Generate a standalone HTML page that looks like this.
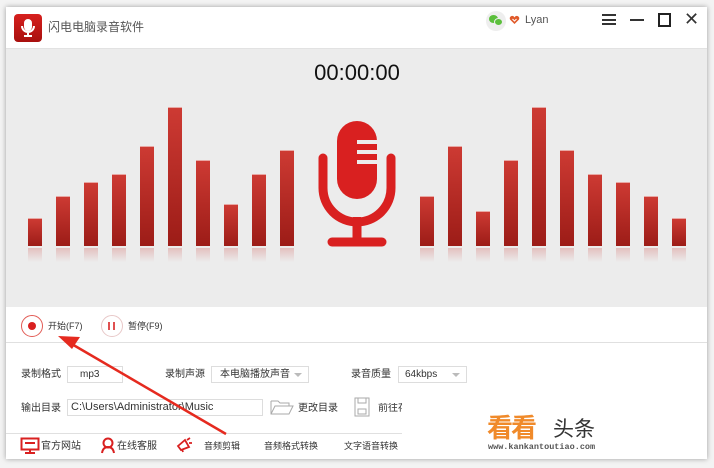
<!DOCTYPE html>
<html><head><meta charset="utf-8"><style>
*{margin:0;padding:0;box-sizing:border-box}
body{width:714px;height:468px;background:#f3f3f3;position:relative;overflow:hidden;font-family:"Liberation Sans","Noto Sans CJK SC",sans-serif;font-size:10px;color:#333}
.a{position:absolute;line-height:1.2}
.win{left:6px;top:7px;width:701px;height:452px;background:#fff;box-shadow:0 0 5px rgba(0,0,0,.35)}
.bar{position:absolute;width:14px;background:linear-gradient(#cd3a33,#9c1c17);border-top:1px solid #e8a8a4}
.ref{position:absolute;width:14px;height:14px;background:linear-gradient(rgba(200,60,55,.25),rgba(236,236,236,0))}
.box{position:absolute;border:1px solid #ddd;background:#fff;height:17px;font-size:10px;padding:2px 0 0 12px;color:#333;line-height:1.2}
.tri{position:absolute;right:6px;top:6px;border:4px solid transparent;border-top:4px solid #bbb;border-bottom:0}
</style></head><body>
<div class="a win"></div>
<div class="a" style="left:14px;top:14px;width:28px;height:28px;border-radius:4px;background:linear-gradient(#d7201e,#a8100e)"></div>
<svg class="a" style="left:14px;top:14px" width="28" height="28"><g fill="none" stroke="#fff" stroke-width="2"><rect x="11" y="6" width="6" height="10" rx="3" fill="#fff"/><path d="M8 12a6 6 0 0 0 12 0M14 18v4M10 22h8"/></g></svg>
<div class="a" style="left:48px;top:20px;font-size:12px;color:#555">闪电电脑录音软件</div>
<div class="a" style="left:486px;top:11px;width:20px;height:20px;border-radius:50%;background:#eee"></div>
<div class="a" style="left:489px;top:15px;width:9px;height:8px;border-radius:50%;background:#5bbf3c"></div>
<div class="a" style="left:494px;top:18px;width:9px;height:8px;border-radius:50%;background:#5bbf3c;border:1px solid #eee"></div>
<svg class="a" style="left:509px;top:15px" width="11" height="10"><path d="M5.5 9L1 4.5Q0 2 2.5 1 4.5 0.5 5.5 2.5 6.5 0.5 8.5 1 11 2 10 4.5z" fill="#e05a2a"/><path d="M3.5 4l2 2 2-2" stroke="#fff" fill="none"/></svg>
<div class="a" style="left:525px;top:14px;font-size:11px;color:#555">Lyan</div>
<div class="a" style="left:602px;top:14px;width:14px;height:11px;border-top:2px solid #333;border-bottom:2px solid #333"></div>
<div class="a" style="left:602px;top:19px;width:14px;height:2px;background:#333"></div>
<div class="a" style="left:630px;top:19px;width:14px;height:2px;background:#333"></div>
<div class="a" style="left:658px;top:13px;width:13px;height:14px;border:2px solid #222"></div>
<div class="a" style="left:684px;top:9px;font-size:18px;color:#333">✕</div>
<div class="a" style="left:6px;top:48px;width:701px;height:259px;background:#ececec;border-top:1px solid #e2e2e2"></div>
<div class="a" style="left:0;width:714px;top:60px;text-align:center;font-size:22px;color:#111">00:00:00</div>
<div id="bars"></div>
<script>
var L=[218,196,182,174,146,107,160,204,174,150],R=[196,146,211,160,107,150,174,182,196,218],h='';
L.forEach(function(t,i){h+='<div class="bar" style="left:'+(28+i*28)+'px;top:'+t+'px;height:'+(246-t)+'px"></div><div class="ref" style="left:'+(28+i*28)+'px;top:248px"></div>'});
R.forEach(function(t,i){h+='<div class="bar" style="left:'+(420+i*28)+'px;top:'+t+'px;height:'+(246-t)+'px"></div><div class="ref" style="left:'+(420+i*28)+'px;top:248px"></div>'});
document.getElementById('bars').innerHTML=h;
</script>
<svg class="a" style="left:310px;top:115px" width="95" height="135"><g fill="#d92020"><rect x="27" y="6" width="40" height="78" rx="20"/></g><g fill="#ececec"><rect x="47" y="25" width="22" height="4"/><rect x="47" y="35" width="22" height="4"/><rect x="47" y="45" width="22" height="4"/></g><g fill="none" stroke="#d92020" stroke-width="9" stroke-linecap="round"><path d="M13 43v30a34 34 0 0 0 68 0v-30"/><path d="M47 107v20"/><path d="M22 127h50"/></g><path d="M47 102v22" stroke="#d92020" stroke-width="8"/></svg>
<div class="a" style="left:21px;top:315px;width:22px;height:22px;border-radius:50%;border:1.5px solid #e25b55;background:#fff"></div>
<div class="a" style="left:28px;top:322px;width:8px;height:8px;border-radius:50%;background:#d92020"></div>
<div class="a" style="left:48px;top:321px;font-size:9px">开始(F7)</div>
<div class="a" style="left:101px;top:315px;width:22px;height:22px;border-radius:50%;border:1px solid #e8c8c8;background:#fff"></div>
<div class="a" style="left:108px;top:322px;width:2px;height:8px;background:#e05050"></div>
<div class="a" style="left:113px;top:322px;width:2px;height:8px;background:#e05050"></div>
<div class="a" style="left:128px;top:321px;font-size:9px">暂停(F9)</div>
<div class="a" style="left:6px;top:342px;width:701px;height:1px;background:#e0e0e0"></div>
<div class="a" style="left:21px;top:369px">录制格式</div>
<div class="box" style="left:67px;top:366px;width:56px">mp3</div>
<div class="a" style="left:165px;top:369px">录制声源</div>
<div class="box" style="left:211px;top:366px;width:98px;padding-left:8px">本电脑播放声音<div class="tri"></div></div>
<div class="a" style="left:351px;top:369px">录音质量</div>
<div class="box" style="left:398px;top:366px;width:69px;padding-left:6px">64kbps<div class="tri"></div></div>
<div class="a" style="left:21px;top:403px">输出目录</div>
<div class="box" style="left:67px;top:399px;width:196px;padding-left:3px;font-size:11px;padding-top:1px">C:\Users\Administrator\Music</div>
<svg class="a" style="left:270px;top:398px" width="24" height="18"><path d="M1 3h7l2 2h9v3M1 3v13h18l4-8H5L1 16" fill="none" stroke="#aaa"/></svg>
<div class="a" style="left:298px;top:403px">更改目录</div>
<svg class="a" style="left:354px;top:397px" width="16" height="20"><rect x="1" y="1" width="14" height="18" fill="none" stroke="#aaa"/><rect x="4" y="1" width="8" height="5" fill="none" stroke="#aaa"/><rect x="4" y="12" width="8" height="5" fill="none" stroke="#aaa"/></svg>
<div class="a" style="left:378px;top:403px;width:24px;overflow:hidden;white-space:nowrap">前往存</div>
<div class="a" style="left:6px;top:433px;width:396px;height:1px;background:#e0e0e0"></div>
<svg class="a" style="left:20px;top:437px" width="20" height="17"><rect x="1.5" y="1.5" width="17" height="11" fill="none" stroke="#d92020" stroke-width="2"/><path d="M5 6h10M10 12v3M5 16h10" stroke="#d92020" stroke-width="2"/></svg>
<div class="a" style="left:41px;top:441px">官方网站</div>
<svg class="a" style="left:100px;top:437px" width="16" height="17"><circle cx="8" cy="6" r="4.5" fill="none" stroke="#d92020" stroke-width="2"/><path d="M2 16q1-6 6-6t6 6" fill="none" stroke="#d92020" stroke-width="2"/></svg>
<div class="a" style="left:117px;top:441px">在线客服</div>
<svg class="a" style="left:176px;top:437px" width="16" height="16"><path d="M2 9l7-6 4 7-8 3zM6 12l1 3M11 3l3-2M13 6h3" fill="none" stroke="#d92020" stroke-width="1.8"/></svg>
<div class="a" style="left:204px;top:441px;font-size:9px">音频剪辑</div>
<div class="a" style="left:264px;top:441px;font-size:9px">音频格式转换</div>
<div class="a" style="left:344px;top:441px;font-size:9px">文字语音转换</div>
<div class="a" style="left:487px;top:415px;font-size:26px;line-height:1;font-weight:bold;color:#f08a2a;letter-spacing:-2px">看看</div>
<div class="a" style="left:553px;top:419px;font-size:21px;line-height:1;color:#333">头条</div>
<div class="a" style="left:488px;top:443px;font-family:'Liberation Mono',monospace;font-size:8.5px;line-height:1;color:#555;font-weight:bold">www.kankantoutiao.com</div>
<svg class="a" style="left:0;top:0" width="714" height="468"><path d="M226 434L70 343" stroke="#e52a1f" stroke-width="2.5"/><path d="M58 336l22 1-8 12z" fill="#e52a1f"/></svg>
</body></html>
